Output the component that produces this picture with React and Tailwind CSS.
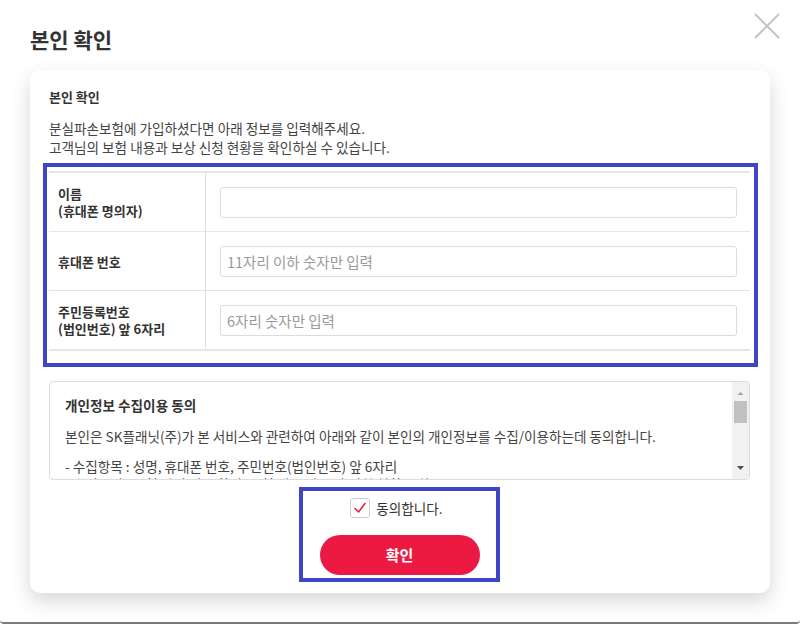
import React from "react";

const font = { fontFamily: '"Noto Sans CJK KR", "Noto Sans", sans-serif' };

function Row({ label, placeholder, first, last, h }) {
  return (
    <div
      className={`flex ${h} ${first ? "border-t-2 border-[#e6e6e6]" : ""} ${
        last ? "border-b-2 border-[#e6e6e6]" : "border-b border-[#e3e3e3]"
      }`}
    >
      <div className="w-[157px] shrink-0 border-r border-[#dedede] pl-[9px] flex flex-col justify-center text-[13px] font-bold leading-[17px] text-[#333]">
        {label.map((l, i) => (
          <div key={i}>{l}</div>
        ))}
      </div>
      <div className="flex-1 flex items-center pl-[14px] pr-[13px]">
        <input
          className="w-full h-[31px] rounded-[3px] border border-[#dcdcdc] px-[6px] text-[14.5px] text-[#333] placeholder:text-[#9a9a9a] outline-none"
          style={font}
          placeholder={placeholder}
        />
      </div>
    </div>
  );
}

export default function App() {
  return (
    <div
      className="w-[800px] h-[624px] bg-white border-b-2 border-[#7a7a7a] rounded-b-[4px] overflow-hidden flex flex-col"
      style={font}
    >
      <div className="h-[70px] shrink-0 flex justify-between pl-[30px] pr-[20px]">
        <h1 className="mt-[25px] text-[21px] font-bold leading-[28px] text-[#333]">본인 확인</h1>
        <button className="mt-[13px] w-[26px] h-[26px]">
          <svg width="26" height="26" viewBox="0 0 26 26">
            <path d="M1 1 L25 25 M25 1 L1 25" stroke="#c6c6c6" strokeWidth="2" fill="none" />
          </svg>
        </button>
      </div>

      <div className="mx-[30px] h-[523px] shrink-0 rounded-[10px] bg-white shadow-[0_8px_20px_rgba(0,0,0,0.16)] pl-[19px] pr-[20px] pt-[18px] flex flex-col">
        <div className="text-[13px] font-bold leading-[18px] text-[#333]">본인 확인</div>
        <div className="mt-[13px] text-[13.6px] leading-[19px] text-[#444]">
          <p>분실파손보험에 가입하셨다면 아래 정보를 입력해주세요.</p>
          <p>고객님의 보험 내용과 보상 신청 현황을 확인하실 수 있습니다.</p>
        </div>

        <div className="mt-[6px] ml-[-6px] mr-[-8px] border-4 border-[#3f46c6] pl-[2px] pr-[4px] pt-[4px] pb-[12px]">
          <Row first h="h-[61px]" label={["이름", "(휴대폰 명의자)"]} placeholder="" />
          <Row h="h-[59px]" label={["휴대폰 번호"]} placeholder="11자리 이하 숫자만 입력" />
          <Row last h="h-[60px]" label={["주민등록번호", "(법인번호) 앞 6자리"]} placeholder="6자리 숫자만 입력" />
        </div>

        <div className="mt-[14px] h-[99px] shrink-0 rounded-[4px] border border-[#dcdcdc] flex overflow-hidden">
          <div className="flex-1 overflow-hidden pl-[15px] pt-[14px] text-[13.6px] text-[#444]">
            <div className="font-bold leading-[18px] text-[#333]">개인정보 수집이용 동의</div>
            <p className="mt-[13px] leading-[18px]">
              본인은 SK플래닛(주)가 본 서비스와 관련하여 아래와 같이 본인의 개인정보를 수집/이용하는데 동의합니다.
            </p>
            <p className="mt-[12px] leading-[18px]">- 수집항목 : 성명, 휴대폰 번호, 주민번호(법인번호) 앞 6자리</p>
            <p className="leading-[18px]">- 수집목적 : 보험 가입 여부 확인, 보험 내용 및 보상 신청 현황 조회</p>
          </div>
          <div className="w-[17px] shrink-0 bg-[#f1f1f1] flex flex-col items-center">
            <svg width="9" height="10" viewBox="0 0 9 10" className="mt-[6px]">
              <path d="M1.5 7 L4.5 4 L7.5 7 Z" fill="#a3a3a3" />
            </svg>
            <div className="mt-[3px] w-[13px] h-[22px] bg-[#c1c1c1]" />
            <div className="flex-1" />
            <svg width="9" height="10" viewBox="0 0 9 10" className="mb-[6px]">
              <path d="M1 3 L8 3 L4.5 7 Z" fill="#505050" />
            </svg>
          </div>
        </div>

        <div className="mt-[7px] mx-auto w-[201px] border-4 border-[#3f46c6] pt-[7px] pb-[3px] flex flex-col items-center">
          <label className="flex items-center gap-[6px] mr-[6px]">
            <span className="w-[20px] h-[20px] rounded-[3px] border border-[#cfcfcf] bg-white flex items-center justify-center">
              <svg width="14" height="14" viewBox="0 0 14 14">
                <path d="M2 7.5 L5.5 11 L12 2.5" stroke="#d62a44" strokeWidth="1.6" fill="none" strokeLinecap="round" strokeLinejoin="round" />
              </svg>
            </span>
            <span className="text-[13.6px] leading-[20px] text-[#333]">동의합니다.</span>
          </label>
          <button className="mt-[17px] w-[160px] h-[40px] rounded-full bg-[#ec1a42] text-white text-[15px] font-bold leading-[20px]" style={font}>
            확인
          </button>
        </div>
      </div>
    </div>
  );
}
